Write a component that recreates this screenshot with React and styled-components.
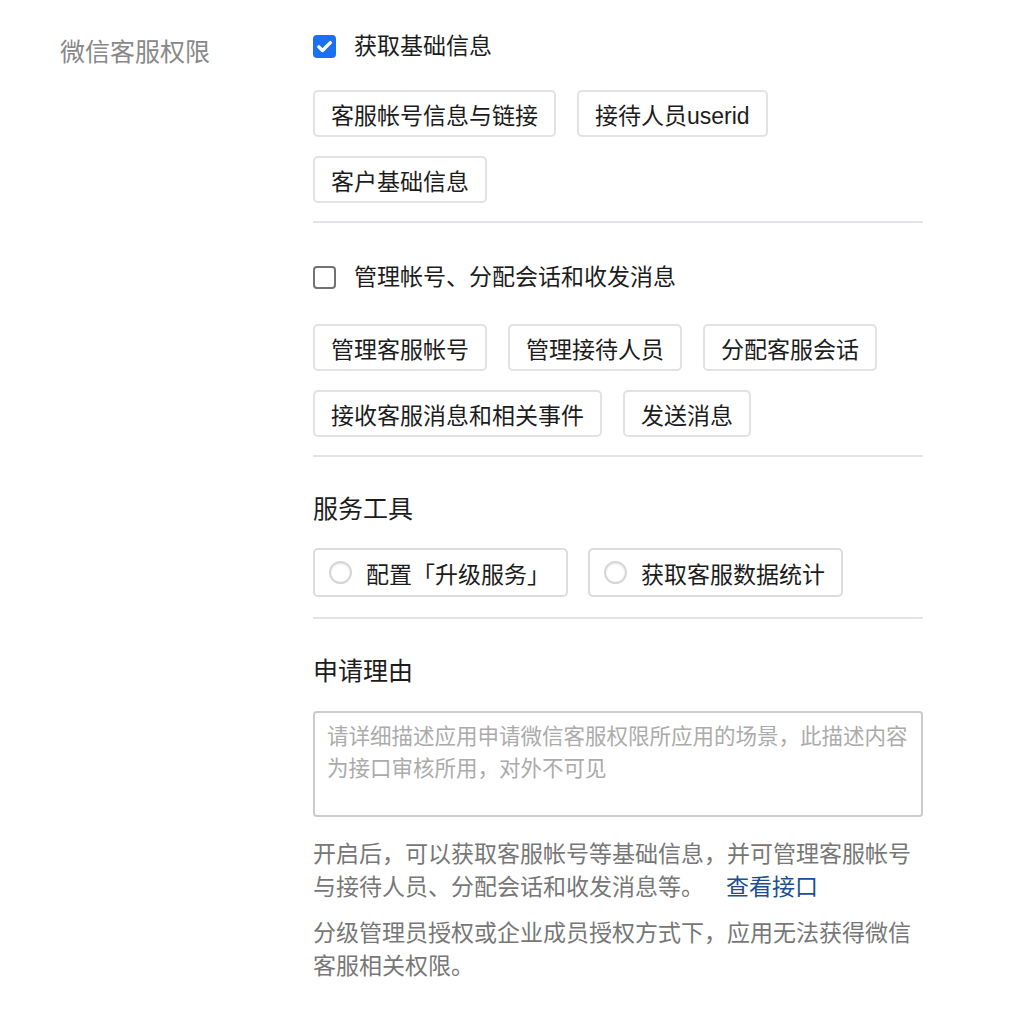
import React from "react";
import styled, { createGlobalStyle } from "styled-components";

const GlobalStyle = createGlobalStyle`
  html, body {
    margin: 0;
    padding: 0;
    background: #fff;
  }
  body {
    font-family: "Liberation Sans", "Noto Sans CJK SC", sans-serif;
    color: #1c1c1c;
  }
`;

const basicTags = ["客服帐号信息与链接", "接待人员userid", "客户基础信息"];
const manageTags = [
  "管理客服帐号",
  "管理接待人员",
  "分配客服会话",
  "接收客服消息和相关事件",
  "发送消息",
];
const tools = ["配置「升级服务」", "获取客服数据统计"];

function CheckIcon() {
  return (
    <svg width="19" height="19" viewBox="0 0 16 16" fill="none">
      <path
        d="M3.2 8.3l3.1 3.1L12.9 4.7"
        stroke="#fff"
        strokeWidth="2.8"
        strokeLinecap="round"
        strokeLinejoin="round"
      />
    </svg>
  );
}

function App() {
  return (
    <Page>
      <GlobalStyle />
      <Label>微信客服权限</Label>
      <Content>
        <CheckRow>
          <Box $checked>
            <CheckIcon />
          </Box>
          <span>获取基础信息</span>
        </CheckRow>
        <Tags>
          {basicTags.map((t) => (
            <Tag key={t}>{t}</Tag>
          ))}
        </Tags>
        <Divider $top={18} />

        <CheckRow $gap={38}>
          <Box />
          <span>管理帐号、分配会话和收发消息</span>
        </CheckRow>
        <Tags $gap={31}>
          {manageTags.map((t) => (
            <Tag key={t}>{t}</Tag>
          ))}
        </Tags>
        <Divider $top={18} />

        <Heading>服务工具</Heading>
        <Tags $gap={21} $col={20}>
          {tools.map((t) => (
            <RadioTag key={t}>
              <Radio />
              {t}
            </RadioTag>
          ))}
        </Tags>
        <Divider $top={20} />

        <Heading>申请理由</Heading>
        <TextArea placeholder="请详细描述应用申请微信客服权限所应用的场景，此描述内容为接口审核所用，对外不可见" />

        <Note>
          <span>开启后，可以获取客服帐号等基础信息，并可管理客服帐号</span>
          <span>与接待人员、分配会话和收发消息等。</span>
          <Link href="#">查看接口</Link>
        </Note>
        <Note $top={13}>
          分级管理员授权或企业成员授权方式下，应用无法获得微信客服相关权限。
        </Note>
      </Content>
    </Page>
  );
}

export default App;

const Page = styled.div`
  display: grid;
  grid-template-columns: 253px 610px;
  padding: 0 0 40px 60px;
  align-items: start;
`;

const Label = styled.div`
  padding-top: 34px;
  font-size: 25px;
  line-height: 36px;
  color: #888;
`;

const Content = styled.div`
  display: flex;
  flex-direction: column;
  padding-top: 30px;
`;

const CheckRow = styled.label`
  display: flex;
  align-items: center;
  gap: 18px;
  margin-top: ${(p) => p.$gap || 0}px;
  font-size: 23px;
  line-height: 32px;
  color: #1c1c1c;
`;

const Box = styled.span`
  width: 23px;
  height: 23px;
  box-sizing: border-box;
  border-radius: 4px;
  display: flex;
  align-items: center;
  justify-content: center;
  background: ${(p) => (p.$checked ? "#1a6ff2" : "#fff")};
  border: ${(p) => (p.$checked ? "none" : "2px solid #727272")};
`;

const Tags = styled.div`
  display: flex;
  flex-wrap: wrap;
  gap: 19px ${(p) => p.$col || 21}px;
  margin-top: ${(p) => p.$gap || 28}px;
`;

const Tag = styled.div`
  height: 47px;
  box-sizing: border-box;
  display: flex;
  align-items: center;
  padding: 0 16px;
  border: 2px solid #e2e2e2;
  border-radius: 5px;
  font-size: 23px;
  color: #1c1c1c;
  white-space: nowrap;
`;

const RadioTag = styled(Tag)`
  height: 49px;
  padding: 0 16px 0 14px;
  gap: 14px;
  border-color: #dcdcdc;
`;

const Radio = styled.span`
  width: 23px;
  height: 23px;
  box-sizing: border-box;
  border-radius: 50%;
  border: 2px solid #d6d6d6;
  box-shadow: inset 0 1px 2px rgba(0, 0, 0, 0.1);
  background: #fff;
`;

const Divider = styled.hr`
  margin: ${(p) => p.$top || 19}px 0 0;
  border: none;
  height: 2px;
  background: #e4e4e8;
`;

const Heading = styled.div`
  margin-top: 34px;
  font-size: 25px;
  line-height: 36px;
  color: #1c1c1c;
`;

const TextArea = styled.textarea`
  margin-top: 22px;
  height: 106px;
  box-sizing: border-box;
  width: 100%;
  resize: none;
  padding: 8px 12px;
  border: 2px solid #cbcbcb;
  border-radius: 4px;
  font-family: "Liberation Sans", "Noto Sans CJK SC", sans-serif;
  font-size: 21.5px;
  line-height: 32px;
  color: #1c1c1c;
  outline: none;

  &::placeholder {
    color: #ababab;
  }
`;

const Note = styled.p`
  margin: ${(p) => p.$top || 21}px 0 0;
  font-size: 23px;
  line-height: 33px;
  color: #777;
`;

const Link = styled.a`
  margin-left: 22px;
  color: #1c4f92;
  text-decoration: none;
`;
